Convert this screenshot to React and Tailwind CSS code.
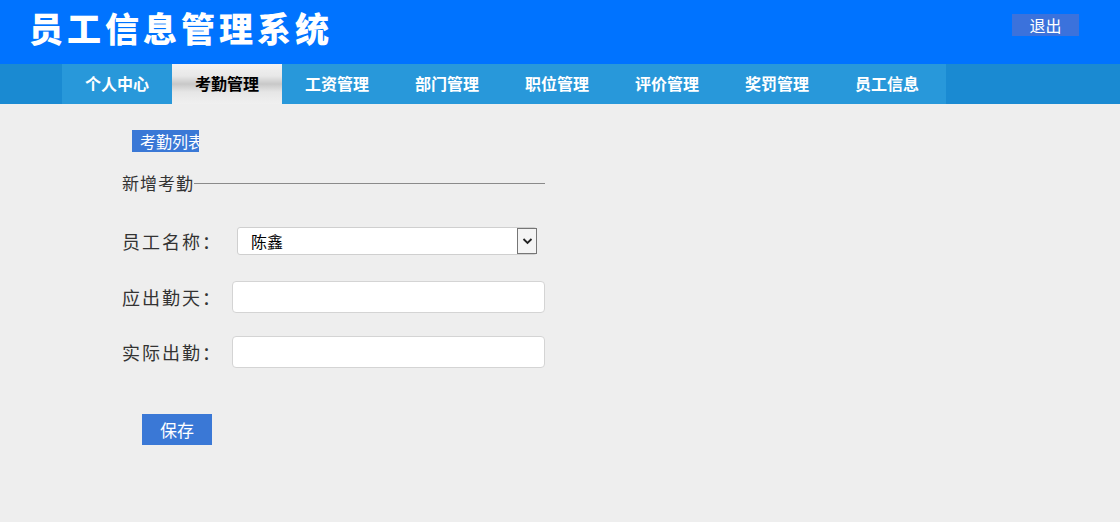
import React from "react";

const navItems = ["个人中心", "考勤管理", "工资管理", "部门管理", "职位管理", "评价管理", "奖罚管理", "员工信息"];

export default function App() {
  const font = { fontFamily: '"Noto Sans CJK SC", "Noto Sans", sans-serif' };
  return (
    <div className="w-[1120px] h-[522px] bg-[#eeeeee] overflow-hidden" style={font}>
      {/* Header */}
      <div className="h-[64px] bg-[#0073ff] flex items-start justify-between">
        <div className="pl-[29px] pt-[4px] text-white text-[34px] font-black tracking-[4px] leading-[48px]">
          员工信息管理系统
        </div>
        <div className="mr-[41px] mt-[14px] w-[67px] h-[22px] bg-[#3b72dc] text-white text-[16px] leading-[22px] text-center">
          退出
        </div>
      </div>
      {/* Nav */}
      <div className="h-[40px] bg-[#1a8ad2]">
        <div className="ml-[62px] w-[884px] h-[40px] bg-[#2898da] flex">
          {navItems.map((t, i) =>
            i === 1 ? (
              <div
                key={t}
                className="w-[110px] h-[40px] pb-[3px] flex items-center justify-center text-black font-bold text-[16px] bg-[linear-gradient(to_bottom,#f2f2f2_0%,#e8e8e8_30%,#c8c8c8_50%,#e6e6e6_70%,#f0f0f0_100%)]"
              >
                {t}
              </div>
            ) : (
              <div key={t} className="w-[110px] h-[40px] pb-[3px] flex items-center justify-center text-white font-bold text-[16px]">
                {t}
              </div>
            )
          )}
        </div>
      </div>
      {/* Content */}
      <div className="pl-[132px] pt-[26px]">
        <div className="w-[67px] h-[22px] bg-[#3a78d6] text-white text-[16px] leading-[22px] overflow-hidden whitespace-nowrap pl-[8px]">
          考勤列表
        </div>
      </div>
      <div className="ml-[122px] mt-[20px] w-[423px] flex items-center">
        <span className="text-[17px] tracking-[1px] text-[#333] leading-[22px]">新增考勤</span>
        <div className="flex-1 h-px bg-[#8a8a8a]"></div>
      </div>
      <div className="ml-[122px] mt-[33px] flex flex-col">
        <div className="flex items-center h-[28px]">
          <span className="w-[115px] text-[18px] tracking-[2px] text-[#333]">员工名称：</span>
          <div className="w-[300px] h-[28px] bg-white border border-[#cfcfcf] rounded-[3px] flex items-center">
            <span className="flex-1 pl-[13px] text-[16px] text-black">陈鑫</span>
            <div className="w-[20px] h-[26px] mr-[-1px] border border-[#767676] bg-[#f4f4f4] flex items-center justify-center">
              <svg width="11" height="8" viewBox="0 0 11 8">
                <path d="M1.5 2 L5.5 6 L9.5 2" fill="none" stroke="#222" strokeWidth="1.8" />
              </svg>
            </div>
          </div>
        </div>
        <div className="flex items-center h-[32px] mt-[26px]">
          <span className="w-[110px] text-[18px] tracking-[2px] text-[#333]">应出勤天：</span>
          <div className="w-[313px] h-[32px] bg-white border border-[#d4d4d4] rounded-[4px]"></div>
        </div>
        <div className="flex items-center h-[32px] mt-[23px]">
          <span className="w-[110px] text-[18px] tracking-[2px] text-[#333]">实际出勤：</span>
          <div className="w-[313px] h-[32px] bg-white border border-[#d4d4d4] rounded-[4px]"></div>
        </div>
        <div className="ml-[20px] mt-[46px] w-[70px] h-[31px] bg-[#3a78d6] text-white text-[17px] leading-[31px] text-center">
          保存
        </div>
      </div>
    </div>
  );
}
